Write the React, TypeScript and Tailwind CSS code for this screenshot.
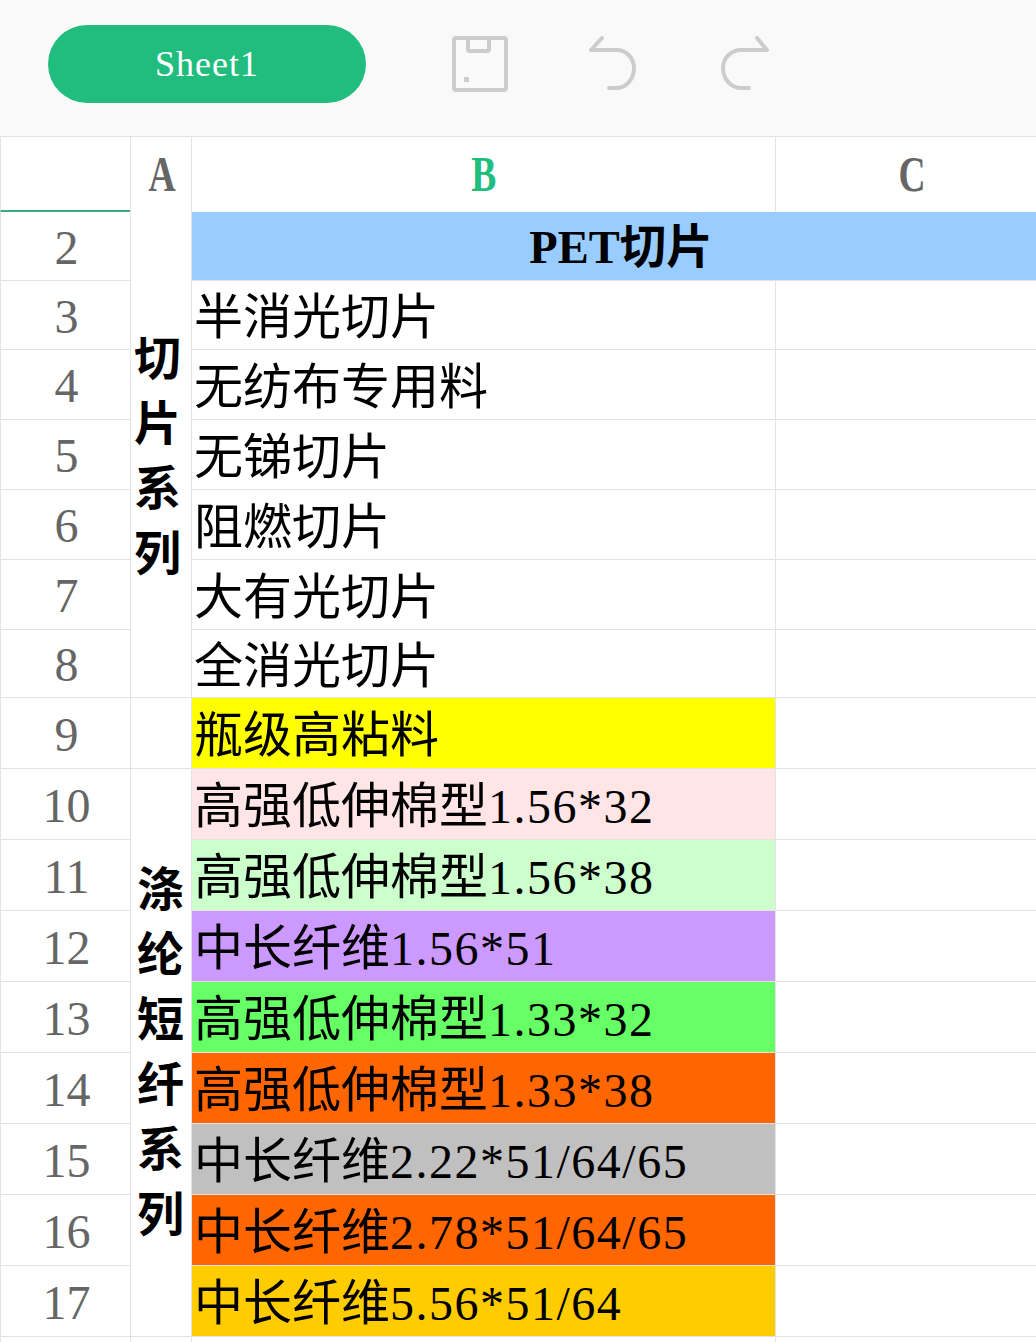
import React from 'react';

const rows = [
  { n: 3, text: '半消光切片', spec: '', bg: 'bg-white' },
  { n: 4, text: '无纺布专用料', spec: '', bg: 'bg-white' },
  { n: 5, text: '无锑切片', spec: '', bg: 'bg-white' },
  { n: 6, text: '阻燃切片', spec: '', bg: 'bg-white' },
  { n: 7, text: '大有光切片', spec: '', bg: 'bg-white' },
  { n: 8, text: '全消光切片', spec: '', bg: 'bg-white' },
  { n: 9, text: '瓶级高粘料', spec: '', bg: 'bg-[#ffff00]' },
  { n: 10, text: '高强低伸棉型', spec: '1.56*32', bg: 'bg-[#ffe5e5]' },
  { n: 11, text: '高强低伸棉型', spec: '1.56*38', bg: 'bg-[#ccffcc]' },
  { n: 12, text: '中长纤维', spec: '1.56*51', bg: 'bg-[#cc99ff]' },
  { n: 13, text: '高强低伸棉型', spec: '1.33*32', bg: 'bg-[#66ff66]' },
  { n: 14, text: '高强低伸棉型', spec: '1.33*38', bg: 'bg-[#ff6600]' },
  { n: 15, text: '中长纤维', spec: '2.22*51/64/65', bg: 'bg-[#c0c0c0]' },
  { n: 16, text: '中长纤维', spec: '2.78*51/64/65', bg: 'bg-[#ff6600]' },
  { n: 17, text: '中长纤维', spec: '5.56*51/64', bg: 'bg-[#ffcc00]' },
];

function RowNumber({ n }: { n: number }) {
  return (
    <div className="flex items-center justify-center border-b border-l border-[#e3e3e3] pl-[2px] pt-[3px] text-[48px] leading-none text-[#666666]">
      {n}
    </div>
  );
}

function Toolbar() {
  return (
    <div className="flex h-[136px] items-center bg-[#f9f9f9] pb-2 pl-12">
      <div className="flex h-[78px] w-[318px] items-center justify-center rounded-[39px] bg-[#20bd7e] text-[36px] tracking-[1px] text-white">
        Sheet1
      </div>
      <svg className="ml-[86px] h-14 w-14" viewBox="0 0 56 56" fill="none" stroke="#cccccc" strokeWidth="4" strokeLinejoin="round">
        <rect x="2" y="2" width="52" height="52" rx="2" />
        <path d="M16 3v10a2 2 0 0 0 2 2h17a2 2 0 0 0 2-2V3" />
        <path d="M12 41h5v5h-5z" fill="#cccccc" strokeWidth="0" />
      </svg>
      <svg className="ml-[80px] h-14 w-[50px]" viewBox="0 0 50 56" fill="none" stroke="#cccccc" strokeWidth="4" strokeLinecap="round" strokeLinejoin="round">
        <path d="M14 2 3 14h26c9 0 17 8 17 18 0 11-8 20-17 20h-8" />
      </svg>
      <svg className="ml-[82px] h-14 w-[50px]" viewBox="0 0 50 56" fill="none" stroke="#cccccc" strokeWidth="4" strokeLinecap="round" strokeLinejoin="round">
        <path d="M37 2l10 12H21C11 14 3 22 3 32c0 11 8 20 18 20h8" />
      </svg>
    </div>
  );
}

export default function App() {
  return (
    <div className="h-[1342px] w-[1036px] overflow-hidden bg-white font-['Liberation_Serif','Noto_Sans_CJK_SC',serif] text-black">
      <Toolbar />
      <div className="grid grid-cols-[130px_61px_584px_261px] grid-rows-[75px_69px_69px_70px_70px_70px_70px_68px_71px_71px_71px_71px_71px_71px_71px_71px_71px_40px] border-t border-[#e3e3e3]">
        {/* column headers */}
        <div className="border-b-2 border-l border-b-[#3fa77f] border-l-[#e3e3e3]" />
        <div className="flex items-center justify-center border-l border-[#e3e3e3] pl-[3px] text-[50px] font-bold text-[#666666]">
          <span className="inline-block scale-x-[.75]">A</span>
        </div>
        <div className="flex items-center justify-center border-l border-[#e3e3e3] text-[50px] font-bold text-[#20bd7e]">
          <span className="inline-block scale-x-[.75]">B</span>
        </div>
        <div className="flex items-center justify-center border-l border-[#e3e3e3] pl-3 text-[50px] font-bold text-[#666666]">
          <span className="inline-block scale-x-[.75]">C</span>
        </div>

        {/* row 2 */}
        <RowNumber n={2} />
        <div className="row-span-7 flex items-center border-b border-l border-[#e3e3e3] pt-[4px] pl-[3px] text-[47px] leading-[65px] font-bold">
          <div className="w-[47px]">切片系列</div>
        </div>
        <div className="col-span-2 flex items-center justify-center border-b border-l border-[#e3e3e3] bg-[#99ccff] pl-[14px] pt-[3px] text-[46.5px] font-bold">PET切片</div>

        {rows.map((r) => (
          <React.Fragment key={r.n}>
            <RowNumber n={r.n} />
            {r.n === 9 && <div className="border-b border-l border-[#e3e3e3]" />}
            {r.n === 10 && (
              <div className="row-span-8 flex items-center border-b border-l border-[#e3e3e3] pl-[6px] pt-[1px] text-[47px] leading-[65px] font-bold">
                <div className="w-[47px]">涤纶短纤系列</div>
              </div>
            )}
            <div className={`flex items-center overflow-hidden whitespace-nowrap border-b border-l border-[#e3e3e3] pl-[2px] pt-[5px] text-[49px] leading-none ${r.bg}`}>
              {r.text}
              {r.spec && <span className="text-[48px] tracking-[1.5px]">{r.spec}</span>}
            </div>
            <div className="border-b border-l border-[#e3e3e3]" />
          </React.Fragment>
        ))}

        {/* row 18, cut off by the window */}
        <div className="border-l border-[#e3e3e3]" />
        <div className="border-l border-[#e3e3e3]" />
        <div className="border-l border-[#e3e3e3]" />
        <div className="border-l border-[#e3e3e3]" />
      </div>
    </div>
  );
}
